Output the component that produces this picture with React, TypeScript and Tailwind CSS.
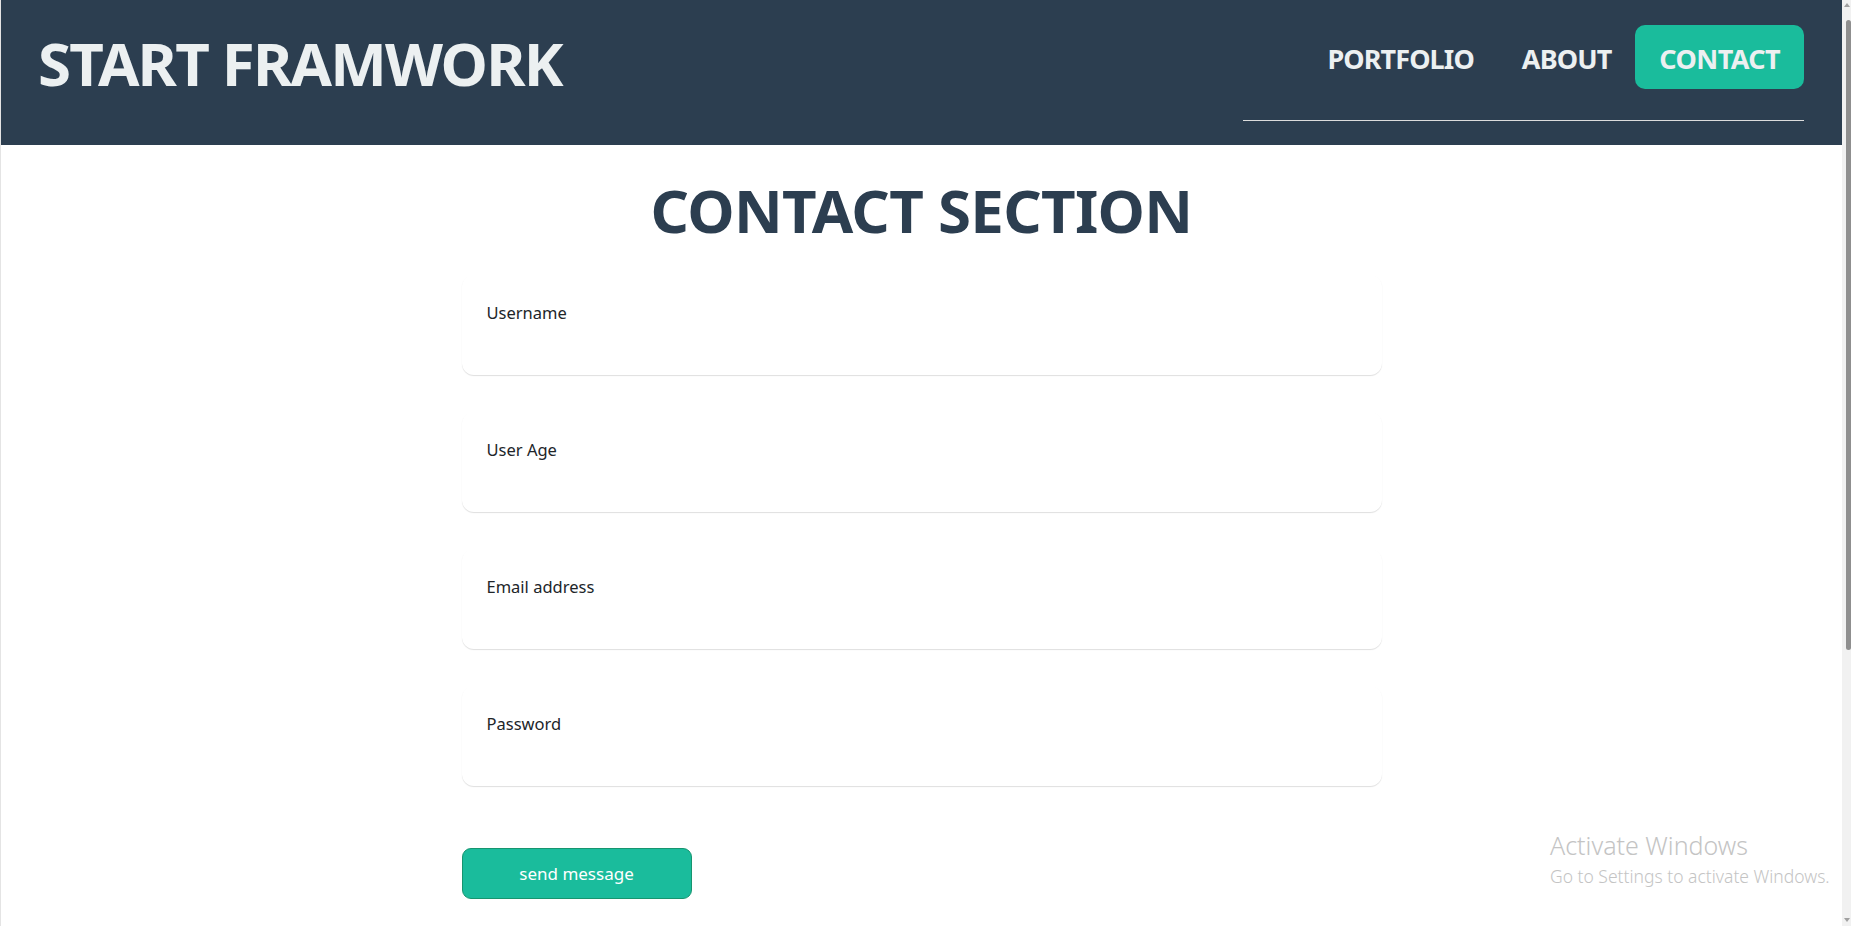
const links = ["PORTFOLIO", "ABOUT"];
const fields = ["Username", "User Age", "Email address", "Password"];

function Field({ label }: { label: string }) {
  return (
    <div className="flex h-[100px] flex-col rounded-xl px-[25px] pt-[30px] shadow-[0_1px_1px_rgba(0,0,0,0.13)]">
      <label className="block text-[16.5px] leading-none text-[#212529]">{label}</label>
      <input className="mt-2 flex-1 bg-transparent outline-none" aria-label={label} />
    </div>
  );
}

export default function App() {
  return (
    <div className="flex h-screen overflow-hidden border-l border-[#e4e4e4] bg-white font-['Noto_Sans',sans-serif]">
      <div className="relative flex-1">
        <header className="flex h-[145px] items-start justify-between bg-[#2c3e50] pl-[37px] pr-[38px]">
          <h1 className="mt-[33px] text-[60px] font-bold leading-none tracking-[-1.8px] text-[#ecf0f1]">START FRAMWORK</h1>
          <nav>
            <ul className="mt-[25px] flex border-b border-[#dcdcdc] pb-[31px] pl-[60px]">
              {links.map((l) => (
                <li key={l} className="flex h-16 items-center px-6 pt-[3px] text-[27px] font-bold leading-none tracking-[-0.9px] text-[#ecf0f1]">
                  {l}
                </li>
              ))}
              <li className="flex h-16 items-center rounded-[10px] bg-[#1abc9c] px-6 pt-[3px] text-[27px] font-bold leading-none tracking-[-0.6px] text-[#ecf0f1]">
                CONTACT
              </li>
            </ul>
          </nav>
        </header>

        <h2 className="mt-[35px] text-center text-[60px] font-bold leading-none tracking-[-0.7px] text-[#2c3e50]">CONTACT SECTION</h2>

        <form className="mx-auto mt-[35px] flex w-[920px] flex-col gap-[37px]">
          {fields.map((f) => (
            <Field key={f} label={f} />
          ))}
          <button
            type="button"
            className="mt-[25px] h-[51px] w-[230px] self-start rounded-[9px] border border-[#17956f] bg-[#1abc9c] text-[17px] text-white"
          >
            send message
          </button>
        </form>

        {/* windows watermark */}
        <div className="pointer-events-none absolute left-[1549px] top-[833px] text-[#c4c4c4]">
          <p className="text-[25px] font-light leading-none">Activate Windows</p>
          <p className="mt-[10px] text-[17.5px] font-light leading-none">Go to Settings to activate Windows.</p>
        </div>
      </div>

      {/* browser scrollbar */}
      <div className="flex w-[9px] flex-col items-end bg-[#f1f1f1]">
        <div className="mt-[3px] h-0 w-0 self-center border-x-[3px] border-b-[4px] border-x-transparent border-b-[#a0a0a0]" />
        <div className="mt-[13px] h-[630px] w-[5px] rounded-full bg-[#8f8f8f]" />
        <div className="mt-auto mb-[4px] h-0 w-0 self-center border-x-[3px] border-t-[4px] border-x-transparent border-t-[#a0a0a0]" />
      </div>
    </div>
  );
}
